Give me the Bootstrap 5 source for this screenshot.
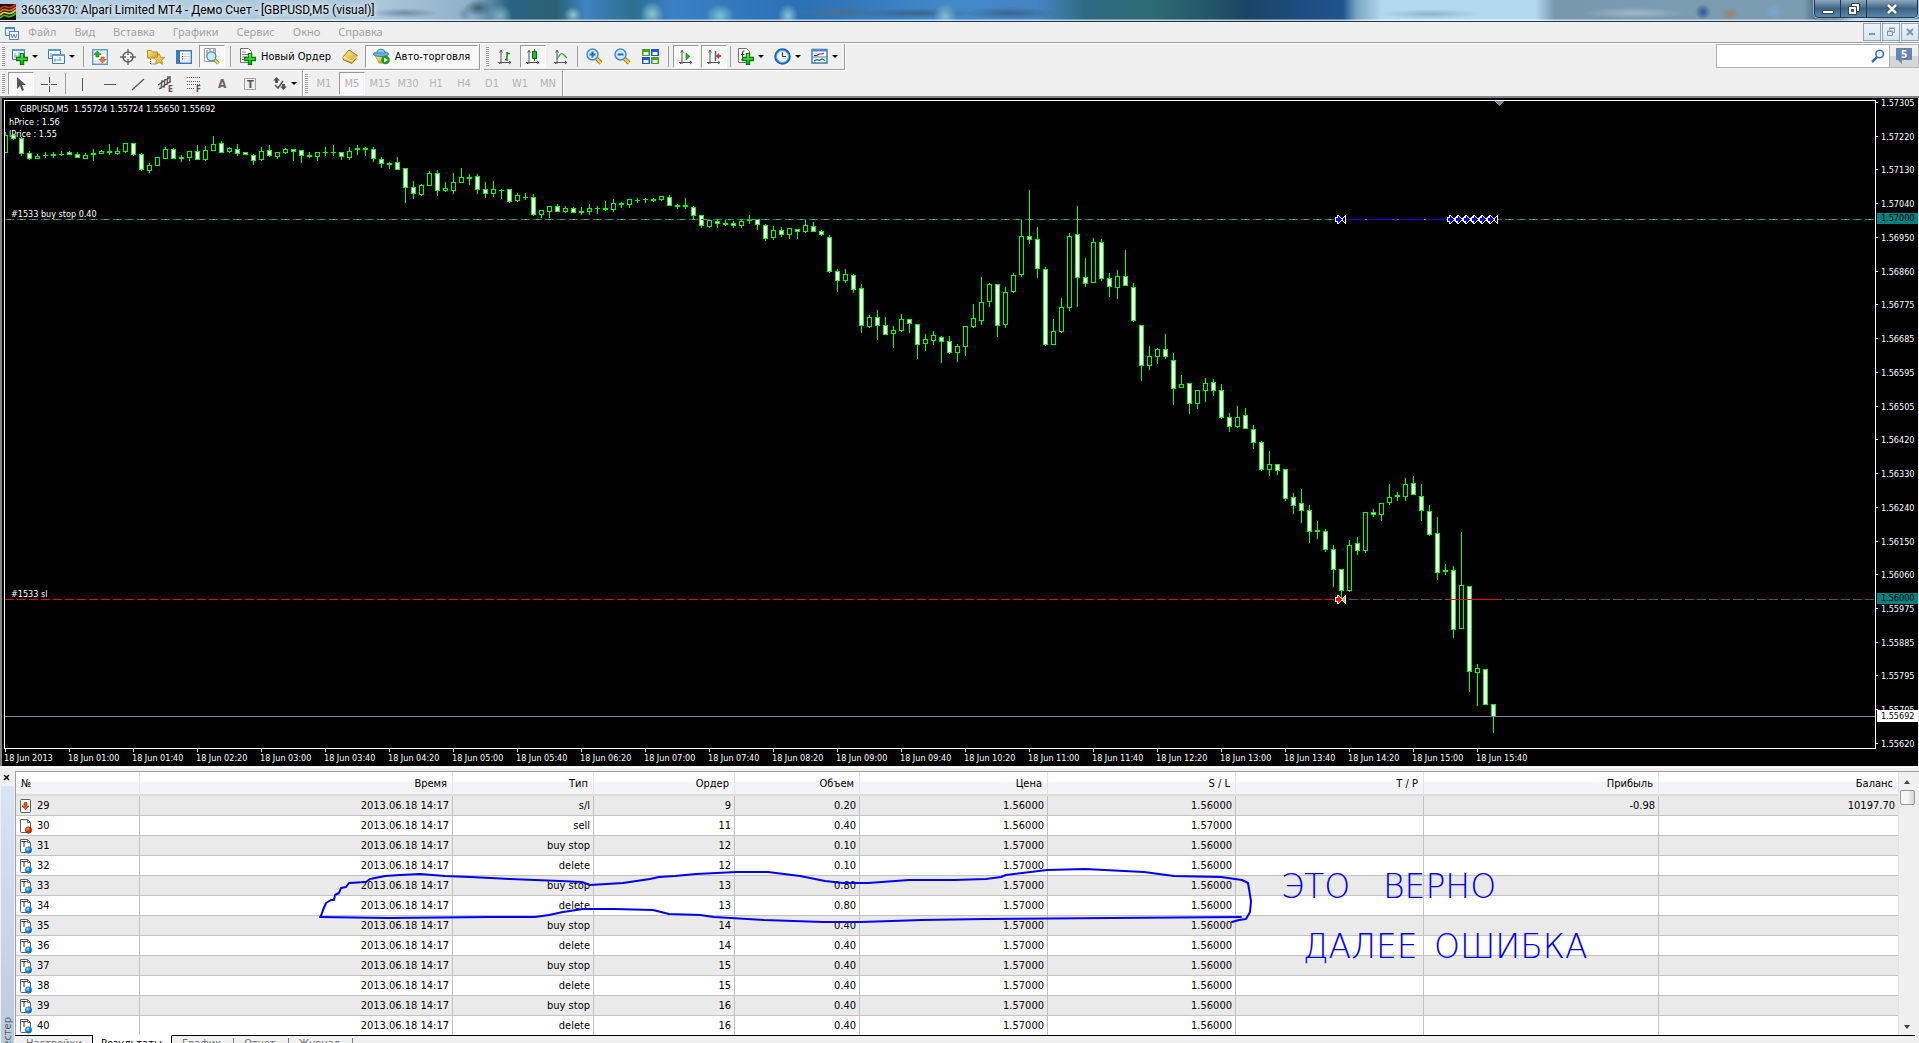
<!DOCTYPE html>
<html lang="ru">
<head>
<meta charset="utf-8">
<meta name="viewport" content="width=device-width, initial-scale=1">
<title>36063370: Alpari Limited MT4 - Демо Счет - [GBPUSD,M5 (visual)]</title>
<link href="https://cdn.jsdelivr.net/npm/bootstrap@5.3.0/dist/css/bootstrap.min.css" rel="stylesheet">
<style>
  :root { --ui: "DejaVu Sans Condensed", "DejaVu Sans", sans-serif; --menu: "Noto Sans", "Open Sans", sans-serif; --face: #f0f0f0; --line: #a0a0a0; }
  body { background: var(--face); color: #000; font-family: var(--ui); font-size: 11px; line-height: 14px; }
  button { font: inherit; color: inherit; }
  svg { display: block; flex: none; }

  /* title bar */
  .title-bar { height: 22px; border-bottom: 1px solid #223549; position: relative;
    background:
      linear-gradient(180deg, rgba(255,255,255,0) 19px, rgba(255,255,255,.7) 20px),
      radial-gradient(ellipse 9px 8px at 573px 15px, #8fc7cf, transparent),
      radial-gradient(ellipse 12px 12px at 500px 16px, #7fb2c4, transparent),
      radial-gradient(ellipse 12px 12px at 652px 14px, #8fc7cf, transparent),
      radial-gradient(ellipse 14px 12px at 720px 16px, #7fc3cf, transparent),
      radial-gradient(ellipse 10px 12px at 788px 16px, #88c4d4, transparent),
      radial-gradient(ellipse 45px 5px at 840px 12px, #4a6f8f, transparent),
      radial-gradient(ellipse 12px 12px at 945px 16px, #82bccc, transparent),
      radial-gradient(ellipse 60px 5px at 915px 13px, #3c658c, transparent),
      radial-gradient(ellipse 45px 6px at 1010px 13px, #3c658c, transparent),
      radial-gradient(ellipse 14px 8px at 478px 8px, #3c6276, transparent),
      radial-gradient(ellipse 8px 8px at 465px 14px, #6d94b4, transparent),
      radial-gradient(ellipse 34px 5px at 405px 13px, #6f8ea4, transparent),
      radial-gradient(ellipse 50px 5px at 1430px 14px, #8fb4ca, transparent),
      radial-gradient(ellipse 8px 8px at 1703px 12px, #2c569a, transparent),
      radial-gradient(ellipse 9px 6px at 1730px 14px, #a08070, transparent),
      radial-gradient(ellipse 8px 8px at 1774px 12px, #77a9d8, transparent),
      radial-gradient(ellipse 50px 6px at 1635px 13px, #9db9cb, transparent),
      radial-gradient(ellipse 22px 10px at 1860px 18px, #a9d8f4, transparent),
      linear-gradient(90deg, #b3cfe3 0, #a9c6da 20%, #8fb0c8 24.5%, #2b6484 26.5%, #2a6172 29%, #3f83c2 30.5%, #2d6f8f 33%, #3a80c4 35%, #2c70b4 42%, #4189c8 49%, #4685c4 54%, #2e6b85 56.5%, #2c6c74 60%, #245a6c 62.5%, #1a4664 65%, #1d4c80 68%, #1f5590 70%, #7ba6c2 70.7%, #b2d9f0 72%, #b2d9f0 80%, #7899ad 81%, #7b9db2 94%, #2a5274 95%, #42709a 97%, #6a98c2 100%); }
  .title-text { font: 12px/20px Roboto, sans-serif; padding-left: 5px; text-shadow: 0 0 6px #fff, 0 0 8px #fff; }
  .win-group { height: 18px; width: 104px; border: 1px solid #22384e; border-top: 0; border-radius: 0 0 5px 5px; box-shadow: 0 0 0 1px rgba(255,255,255,.4); margin-right: 1px; }
  .win-btn { border: 0; background: linear-gradient(180deg, #8fa9bf, #3d6384 50%, #5c86a8); height: 17px; flex: 1 1 0; padding: 0; display: grid; place-items: center; }
  .win-btn + .win-btn { border-left: 1px solid #22384e; }
  .win-btn:first-child { border-radius: 0 0 0 4px; } .win-btn:last-child { border-radius: 0 0 4px 0; flex-grow: 2; }

  /* menu */
  .menu-row { height: 22px; border-bottom: 1px solid #fff; box-shadow: inset 0 -1px 0 var(--line); font: 11px/20px var(--menu); }
  .menu-row a { color: #a2a2a2; text-decoration: none; }
  .menu-links { gap: 18px; padding-left: 8px; }
  .mdi-set { gap: 1px; padding-top: 1px; }
  .mdi-btn { width: 18px; height: 18px; border: 1px solid #96a5b4; background: linear-gradient(180deg, #eef4fb, #d4e4f4); padding: 0; display: grid; place-items: center; }

  /* toolbars */
  .tool-row-a { height: 27px; }
  .tool-row-b { height: 27px; border-bottom: 2px solid #858585; }
  .tool-strip { border-right: 1px solid var(--line); box-shadow: 1px 0 0 #fff; height: 100%; }
  .tool-row-a .tool-strip { border-bottom: 1px solid var(--line); box-shadow: 1px 1px 0 #fff; height: 26px; }
  .grip { width: 3px; height: 19px; margin: 0 2px; background: repeating-linear-gradient(180deg, #9a9a9a 0 1px, #fff 1px 2px); }
  .tool-btn { width: 26px; height: 23px; margin: 0 1px; padding: 0; border: 1px solid transparent; background: none; display: flex; align-items: center; justify-content: center; flex: none; }
  .tool-btn.pressed { border-color: #9a9a9a #fff #fff #9a9a9a; background: #f8f8f8; }
  .tool-wide { width: auto; padding: 0 3px; gap: 5px; white-space: nowrap; }
  .tool-auto { width: 113px; }
  .tool-drop { width: 37px; height: 23px; padding: 0 0 0 4px; border: 0; background: none; display: flex; align-items: center; gap: 4px; flex: none; }
  .tool-drop::after { content: ""; border: 3px solid transparent; border-top-color: #000; border-bottom: 0; }
  .tool-drop.short { width: 34px; gap: 3px; }
  .tsep { width: 1px; height: 21px; margin: 0 2px; background: var(--line); flex: none; }
  .tsep.roomy { margin: 0 3px 0 4px; }
  .frame-btn { color: #b4b4b4; }
  .find-box { width: 174px; height: 24px; border: 1px solid #b0b0b0; background: #fff; }
  .find-box input { border: 0; outline: 0; background: none; min-width: 0; }
  .chat-btn { width: 29px; height: 24px; border: 1px solid #b8b8b8; border-left: 0; background: linear-gradient(180deg, #efefef 50%, #d6d6d6 50%); padding: 0; display: grid; place-items: center; }

  /* chart */
  .chart-pane { background: #000; color: #fff; border-left: 2px solid #858585; border-right: 1px solid #f0f0f0; padding: 2px 0 0 2px; font-size: 9px; line-height: 12px; min-height: 0; }
  .chart-body { min-height: 0; }
  .plot-box { border: 1px solid #fff; overflow: hidden; min-width: 0; }
  .price-axis { width: 42px; position: relative; padding: 0 0 0 5px; margin: -3px 0 -1px; }
  .price-axis div { position: relative; white-space: nowrap; }
  .price-axis .tick::before { content: ""; position: absolute; left: -5px; top: 5px; width: 2px; height: 1px; background: #fff; }
  .price-axis .price-tag { position: absolute; left: 1px; right: 0; padding-left: 4px; line-height: 11px; height: 11px; background: #008080; color: #000; }
  .price-axis .price-tag.bid { background: #fff; height: 12px; line-height: 12px; }
  .time-axis { height: 17px; overflow: hidden; }
  .time-axis span { width: 64px; flex: none; position: relative; padding-top: 3px; white-space: nowrap; }
  .time-axis span::before { content: ""; position: absolute; left: 1px; top: 0; width: 1px; height: 3px; background: #fff; }

  /* tester */
  .tester { height: 277px; border-top: 1px solid var(--face); box-shadow: inset 0 1px 0 #fff; position: relative; overflow: hidden; }
  .side-tab { width: 15px; }
  .side-close { border: 0; background: none; padding: 0; height: 18px; margin: 1px 0 0 3px; line-height: 18px; }
  .side-bar { width: 13px; margin-left: 1px; background: linear-gradient(180deg, #d9e5f2, #bccbdc); color: #4c5a68; writing-mode: vertical-rl; line-height: 13px; position: relative; }
  .side-bar span { transform: rotate(180deg); position: absolute; left: 0; bottom: -10px; }
  .grid-side { min-width: 0; }
  .grid-wrap { border-left: 1px solid var(--line); border-top: 1px solid var(--line); margin: 4px 0 -1px; }
  .result-grid { table-layout: fixed; width: 100%; border-collapse: separate; border-spacing: 0; background: #fff; line-height: 14px; }
  .result-grid th { height: 24px; padding: 2px 5px 0; font-weight: 400; text-align: right; border-right: 1px solid #e2e4e8; border-bottom: 2px solid #dcdcdc; background: linear-gradient(180deg, #fff 45%, #f3f4f6 45%); }
  .result-grid td { height: 20px; padding: 0 3px; text-align: right; border-right: 1px solid #c2c2c2; border-bottom: 1px solid #c2c2c2; }
  .result-grid th:first-child, .result-grid td:first-child { text-align: left; }
  .result-grid th:last-child, .result-grid td:last-child { border-right: 0; }
  .result-grid tbody tr:nth-child(odd) td { background: #eaeaea; }
  .result-grid tbody tr:last-child td { border-bottom: 0; }
  .scroll-col { width: 17px; background: #f0f0f0; border-left: 1px solid #e4e4e4; }
  .scroll-thumb { width: 15px; height: 15px; border: 1px solid #979797; border-radius: 2px; background: linear-gradient(90deg, #f6f6f6 50%, #d4d4d4); margin-top: 6px; }
  .arrow-up, .arrow-down { border: 3px solid transparent; height: 0; width: 0; }
  .arrow-up { border-bottom: 4px solid #444; border-top: 0; margin-top: 8px; } .arrow-down { border-top: 4px solid #444; border-bottom: 0; margin-bottom: 7px; }
  .tab-row { height: 20px; flex: none; color: #707070; margin-right: 4px; position: relative; line-height: 12px; }
  .tab-row a { color: inherit; text-decoration: none; border-top: 1px solid #000; height: 20px; padding-top: 2px; white-space: nowrap; background: var(--face); }
  .tab-row a span { display: block; border-right: 1px solid #808080; padding: 0 12px 0 10px; }
  .tab-row a.first-tab { width: 78px; padding-left: 11px; border-right: 1px solid #000; }
  .tab-row a.active { width: 79px; padding-left: 8px; background: #fff; color: #000; border-top-color: #fff; border-right: 1px solid #000; }
  .ink { position: absolute; left: 0; top: 0; pointer-events: none; }
  .ink text { font-family: "DejaVu Sans", sans-serif; font-weight: 200; font-size: 33px; fill: #00f; }
</style>
<script src="https://cdn.jsdelivr.net/npm/bootstrap@5.3.0/dist/js/bootstrap.bundle.min.js"></script>
</head>
<body class="d-flex flex-column vh-100 overflow-hidden m-0">

<svg width="0" height="0" class="position-absolute" aria-hidden="true">
  <defs>
    <linearGradient id="gGreen" x2="0" y2="1"><stop stop-color="#5dff5d"/><stop offset="1" stop-color="#00a000"/></linearGradient>
    <linearGradient id="gGold" x2="1" y2="1"><stop stop-color="#fff0a0"/><stop offset="1" stop-color="#d09a18"/></linearGradient>
    <radialGradient id="gBlue" cx=".35" cy=".3"><stop stop-color="#9fe0ff"/><stop offset="1" stop-color="#0878c8"/></radialGradient>
    <radialGradient id="gRed" cx=".35" cy=".3"><stop stop-color="#ff9a60"/><stop offset="1" stop-color="#c82800"/></radialGradient>
    <symbol id="plus" viewBox="0 0 11 11"><path d="M4 .5h3V4h3.500v3H7v3.500H4V7H.5V4H4z" fill="url(#gGreen)" stroke="#067a06"/></symbol>
    <symbol id="axes" viewBox="0 0 16 16"><path d="M4 1v14M1 13.500h13M2.500 3.500 4 1.500l1.500 2M12 12l2 1.500-2 1.500M2 15l2-2" fill="none" stroke="#555"/></symbol>
    <symbol id="lens" viewBox="0 0 17 17"><path d="m10.500 10.500 4.500 4.500" stroke="#a87a10" stroke-width="4"/><path d="m10.500 10.500 4.500 4.500" stroke="#ffd84a" stroke-width="2"/><circle cx="6.500" cy="6.500" r="5.500" fill="#cfe9ff" stroke="#4a8ad0" stroke-width="1.500"/></symbol>
    <symbol id="docT" viewBox="0 0 14 16"><path d="M1.500 1.500h7l3 3v9a1 1 0 0 1-1 1h-8a1 1 0 0 1-1-1z" fill="#fff" stroke="#606060"/><path d="M8.500 1.500v3h3" fill="none" stroke="#606060"/><path d="M2.500 3.500h5M5 3.500V9" stroke="#303030"/><circle cx="9.500" cy="12" r="3.200" fill="url(#gBlue)" stroke="#1b68a0" stroke-width=".6"/></symbol>
    <symbol id="docR" viewBox="0 0 14 16"><path d="M1.500 1.500h7l3 3v9a1 1 0 0 1-1 1h-8a1 1 0 0 1-1-1z" fill="#fff" stroke="#606060"/><path d="M8.500 1.500v3h3" fill="none" stroke="#606060"/><circle cx="9.500" cy="12" r="3.200" fill="url(#gRed)" stroke="#982000" stroke-width=".6"/></symbol>
    <symbol id="docDown" viewBox="0 0 14 16"><rect x="1.500" y="1.500" width="10" height="13" rx="1" fill="#fff" stroke="#606060"/><path d="M5 4.500h3V8h2l-3.500 3.500L3 8h2z" fill="#f05010" stroke="#a03000" stroke-width=".6"/></symbol>
    <symbol id="fish" viewBox="0 0 11 9"><path d="M10.500.5v8L6.500 4.500z" fill="var(--tail, #000)" stroke="#fff"/><path d="M0 2h2V0h1l4.500 4.500L3 9H2V7H0z" fill="#fff"/><path d="M1 3h2V1l3.500 3.500L3 8V6H1z" fill="currentColor"/></symbol>
  </defs>
</svg>

<header class="title-bar d-flex flex-shrink-0">
  <svg width="16" height="16" viewBox="0 0 16 16" class="mt-1"><path fill="#111" d="M0 0h16v16H0z"/><g fill="none" stroke-width="1.800"><path d="M0 5q4-4 7-2t9-3" stroke="#d03020"/><path d="M0 8q4-4 7-2t9-3" stroke="#e07020"/><path d="M0 11q4-4 7-2t9-3" stroke="#d8d030"/><path d="M0 14q4-4 7-2t9-3" stroke="#40b030"/></g></svg>
  <div class="title-text text-nowrap">36063370: Alpari Limited MT4 - Демо Счет - [GBPUSD,M5 (visual)]</div>
  <div class="win-group d-flex ms-auto">
    <button class="win-btn" aria-label="Свернуть"><svg width="12" height="12"><path d="M.5 7.500h11v3H.5z" fill="#fff" stroke="#344"/></svg></button>
    <button class="win-btn" aria-label="Развернуть"><svg width="12" height="12"><path d="M3.500.5h8v8h-8z" fill="#fff" stroke="#344"/><path d="M.5 3.500h8v8h-8z" fill="#fff" stroke="#344"/><path d="M3.500 6.500h2v2h-2z" fill="#577" stroke="#344"/></svg></button>
    <button class="win-btn" aria-label="Закрыть"><svg width="12" height="12"><path d="m2 2 8 8m0-8-8 8" stroke="#344" stroke-width="4.500"/><path d="m2 2 8 8m0-8-8 8" stroke="#fff" stroke-width="2.600"/></svg></button>
  </div>
</header>

<nav class="menu-row d-flex flex-shrink-0">
  <svg width="16" height="16" viewBox="0 0 16 16" class="ms-1 mt-1"><path d="M1.500 1.500h9v8h-9z" fill="#e8f2ff" stroke="#4a86d8"/><path d="M1 1h10v2H1zM5 5h10v2H5z" fill="#4a86d8"/><path d="M5.500 5.500h9v8h-9z" fill="#fff" stroke="#4a86d8"/><path d="m7 8 1.500 4L10 8l1.500 4L13 8" fill="none" stroke="#4a86d8"/></svg>
  <div class="d-flex menu-links">
    <a href="#">Файл</a><a href="#">Вид</a><a href="#">Вставка</a><a href="#">Графики</a><a href="#">Сервис</a><a href="#">Окно</a><a href="#">Справка</a>
  </div>
  <div class="d-flex ms-auto mdi-set">
    <button class="mdi-btn" aria-label="Свернуть окно"><svg width="10" height="10"><path d="M2 6h6v2H2z" fill="#8296aa"/></svg></button>
    <button class="mdi-btn" aria-label="Восстановить окно"><svg width="10" height="10"><path d="M3.500 3V1.500h5v4H7M1.500 4.500h5v4h-5zM1 4h6M3 1h6" fill="none" stroke="#8296aa"/></svg></button>
    <button class="mdi-btn" aria-label="Закрыть окно"><svg width="10" height="10"><path d="m2 2 6 6m0-6L2 8" stroke="#8296aa" stroke-width="2"/></svg></button>
  </div>
</nav>

<div class="tool-row-a d-flex flex-shrink-0">
  <div class="tool-strip d-flex align-items-center">
    <i class="grip"></i>
    <button class="tool-drop" aria-label="Новый график"><svg width="17" height="17" viewBox="0 0 17 17"><path d="M1.500 1.500h12v10h-12z" fill="#fff" stroke="#3a7ab8"/><path d="M1 1h13v2H1z" fill="#5b9ad4"/><path d="M4 5v5M3 8h6M8 4v5" stroke="#7aa8cc"/><use href="#plus" x="5" y="5" width="12" height="12"/></svg></button>
    <button class="tool-drop" aria-label="Профили"><svg width="17" height="17" viewBox="0 0 17 17"><path d="M.5 1.500h12v9H.5z" fill="#fff" stroke="#3a7ab8"/><path d="M0 1h13v2H0z" fill="#5b9ad4"/><path d="M4.500 6.500h12v9h-12z" fill="#fff" stroke="#3a7ab8"/><path d="M4 6h13v2H4z" fill="#5b9ad4"/><path d="M7 10v4M6 12h8M12 9v4M2 8h2M3 5v4" stroke="#7aa8cc"/></svg></button>
    <i class="tsep"></i>
    <button class="tool-btn" aria-label="Обзор рынка"><svg width="16" height="16" viewBox="0 0 16 16"><path d="M.7.7h14.600v14.600H.7z" fill="#fff" stroke="#5a9ad0" stroke-width="1.400"/><path d="M8 4h6M2 12h5" stroke="#c4d4e4"/><path d="M5.500 2 9 5.500H7V8H4V5.500H2z" fill="#28b428" stroke="#087008" stroke-width=".6"/><path d="M10.500 14 14 10.500h-2V8H9v2.500H7z" fill="#f08040" stroke="#c03000" stroke-width=".6"/></svg></button>
    <button class="tool-btn" aria-label="Окно данных"><svg width="16" height="16" viewBox="0 0 16 16"><circle cx="8" cy="8" r="5" fill="none" stroke="#666" stroke-width="1.600"/><path d="M8 0v6M8 10v6M0 8h6M10 8h6" stroke="#666" stroke-width="1.400"/></svg></button>
    <button class="tool-btn" aria-label="Навигатор"><svg width="18" height="16" viewBox="0 0 18 16"><path d="M.5 1.500h4l1 1.500h5v6h-10z" fill="url(#gGold)" stroke="#b88a18"/><path d="M3.500 10v5h4" fill="none" stroke="#444" stroke-dasharray="1 1"/><path d="m12 4.500 1.700 3.700 4 .4-3 2.700.9 4-3.600-2-3.600 2 .9-4-3-2.700 4-.4z" fill="url(#gGold)" stroke="#b88a18" stroke-width=".8"/></svg></button>
    <button class="tool-btn" aria-label="Терминал"><svg width="16" height="16" viewBox="0 0 16 16"><path d="M.7 1.700h14.600v12.600H.7z" fill="#fff" stroke="#3a7ab8" stroke-width="1.400"/><path d="M1 2h3v12H1z" fill="#3a7ab8"/><path d="M6 5h8M6 7.500h8M6 10h8M6 12h8" stroke="#c0d0e0"/><path d="M6 5h1M6 7.500h1M6 10h1" stroke="#d04040"/></svg></button>
    <button class="tool-btn pressed" aria-label="Тестер стратегий"><svg width="18" height="18" viewBox="0 0 18 18"><path d="M1.500.5h11v13h-11z" fill="#fff" stroke="#a0a0a0"/><path d="M4 2v8M7 1v4M11 1v4" stroke="#777"/><use href="#lens" x="3" y="3" width="14" height="14"/></svg></button>
    <i class="tsep roomy"></i>
    <button class="tool-btn tool-wide"><svg width="17" height="17" viewBox="0 0 17 17"><path d="M1.500.5h8l3 3v11h-11z" fill="#fff" stroke="#707070"/><path d="M3 4h4M3 6.500h7M3 9h5M3 11.500h3" stroke="#808080"/><use href="#plus" x="5" y="5" width="12" height="12"/></svg>Новый Ордер</button>
    <button class="tool-btn" aria-label="MetaEditor"><svg width="17" height="15" viewBox="0 0 17 15"><path d="m1 8 6-7 9 6-6 7.500-9-4z" fill="url(#gGold)" stroke="#a87010"/><path d="m1 8 8.500 4L16 7" fill="none" stroke="#fff2b0"/></svg></button>
    <button class="tool-btn tool-wide tool-auto pressed"><svg width="17" height="17" viewBox="0 0 17 17"><path d="M2 7h12l-3 8H6z" fill="url(#gGold)" stroke="#b88a18" stroke-width=".8"/><ellipse cx="8" cy="6" rx="7.500" ry="2.500" fill="#6ab4e0" stroke="#3a84b8"/><path d="M4 5q0-4 4-4t4 4z" fill="#8accf0" stroke="#3a84b8" stroke-width=".8"/><circle cx="12.500" cy="12" r="4.300" fill="#18a018"/><path d="M11 9.500v5l4-2.500z" fill="#fff"/></svg>Авто-торговля</button>
  </div>
  <div class="tool-strip d-flex align-items-center ms-1">
    <i class="grip"></i>
    <button class="tool-btn" aria-label="Бары"><svg width="16" height="16"><use href="#axes"/><path d="M10 3v9M8 10.500h2M10 4.500h3" stroke="#188018" stroke-width="1.500"/></svg></button>
    <button class="tool-btn pressed" aria-label="Японские свечи"><svg width="16" height="16"><use href="#axes"/><path d="M9.500 0v12" stroke="#188018"/><path d="M7.500 2.500h4v7h-4z" fill="#20c020" stroke="#087008"/></svg></button>
    <button class="tool-btn" aria-label="Линия"><svg width="16" height="16"><use href="#axes"/><path d="M4 10q4-7 6-5t4 4" fill="none" stroke="#40a040" stroke-width="1.300"/></svg></button>
    <i class="tsep"></i>
    <button class="tool-btn" aria-label="Увеличить"><svg width="17" height="17"><use href="#lens"/><path d="M3.500 6.500h6M6.500 3.500v6" stroke="#2a6ab0" stroke-width="2"/></svg></button>
    <button class="tool-btn" aria-label="Уменьшить"><svg width="17" height="17"><use href="#lens"/><path d="M3.500 6.500h6" stroke="#2a6ab0" stroke-width="2"/></svg></button>
    <button class="tool-btn" aria-label="Расположить окна"><svg width="17" height="17" viewBox="0 0 17 17"><path d="M0 1h8v7H0zM9 9h8v7H9z" fill="#48a018"/><path d="M9 1h8v7H9zM0 9h8v7H0z" fill="#2058d0"/><path d="M1.500 4h5v3h-5zM10.500 4h5v3h-5zM1.500 12h5v3h-5zM10.500 12h5v3h-5z" fill="#e8f4f0"/></svg></button>
    <i class="tsep roomy"></i>
    <button class="tool-btn pressed" aria-label="Автопрокрутка"><svg width="16" height="16"><use href="#axes"/><path d="m8 4 4 3.500L8 11z" fill="#28b428" stroke="#087008" stroke-width=".6"/></svg></button>
    <button class="tool-btn pressed" aria-label="Сдвиг графика"><svg width="16" height="16"><use href="#axes"/><path d="M9.500 2v10" stroke="#3a70b0" stroke-width="1.500"/><path d="m10 7 3-2.500v2h2v1h-2v2z" fill="#d03010" stroke="#d03010" stroke-width=".6"/></svg></button>
    <i class="tsep"></i>
    <button class="tool-drop" aria-label="Индикаторы"><svg width="17" height="17" viewBox="0 0 17 17"><path d="M1.500.5h8l3 3v11h-11z" fill="#fff" stroke="#707070"/><path d="M7.500 3q-2-1-2 2v6q0 1-1.500 1M4 6.500h3.500" fill="none" stroke="#404040"/><use href="#plus" x="5" y="5" width="12" height="12"/></svg></button>
    <button class="tool-drop" aria-label="Периоды"><svg width="17" height="17" viewBox="0 0 17 17"><circle cx="8.500" cy="8.500" r="7" fill="#f4faff" stroke="#1a62c4" stroke-width="2.600"/><circle cx="8.500" cy="8.500" r="6" fill="none" stroke="#6ab8f0"/><path d="M8.500 4.500v4H12" fill="none" stroke="#444" stroke-width="1.200"/></svg></button>
    <button class="tool-drop" aria-label="Шаблоны"><svg width="17" height="17" viewBox="0 0 17 17"><path d="M1 1.500h15v13.500H1z" fill="#fff" stroke="#3a7ab8" stroke-width="1.400"/><path d="M1 1h15v2.500H1z" fill="#4a8aca"/><path d="M1 9h15" stroke="#3a7ab8"/><path d="M3 7.500h3l2-1.500h3l2-1" fill="none" stroke="#902020" stroke-width="1.200"/><path d="m3 13 3-1.500 2 1 3-1.500 3 1.500" fill="none" stroke="#208040" stroke-width="1.200"/></svg></button>
  </div>
  <div class="d-flex ms-auto">
    <div class="find-box d-flex align-items-center"><input type="text" class="flex-fill" aria-label="Поиск"><svg width="14" height="14" viewBox="0 0 14 14" class="me-1"><path d="m1 13 5-5" stroke="#3a6ac8" stroke-width="2.500"/><circle cx="8.700" cy="5" r="3.800" fill="#eef6ff" stroke="#3a6ac8" stroke-width="1.500"/></svg></div>
    <button class="chat-btn" aria-label="Сообщения"><svg width="16" height="16"><path d="M0 0h16v12H6v4l-4-4H0z" fill="#6684b4"/><text x="5" y="10" font-size="10" font-weight="700" fill="#fff">5</text></svg></button>
  </div>
</div>

<div class="tool-row-b d-flex flex-shrink-0">
  <div class="tool-strip d-flex align-items-center">
    <i class="grip"></i>
    <button class="tool-btn pressed" aria-label="Курсор"><svg width="16" height="16"><path d="M4 1v12l3-3 2 5 2-1-2-5h4z" fill="#555"/></svg></button>
    <button class="tool-btn" aria-label="Перекрестие"><svg width="16" height="16"><path d="M8.500 1v6M8.500 10v6M0 8.500h7M10 8.500h6M8 8.500h1" stroke="#555"/></svg></button>
    <i class="tsep"></i>
    <button class="tool-btn" aria-label="Вертикальная линия"><svg width="16" height="16"><path d="M8.500 2v13" stroke="#555"/></svg></button>
    <button class="tool-btn" aria-label="Горизонтальная линия"><svg width="16" height="16"><path d="M2 8.500h12" stroke="#555"/></svg></button>
    <button class="tool-btn" aria-label="Трендовая линия"><svg width="16" height="16"><path d="M2 14 14 3" stroke="#555" stroke-width="1.200"/></svg></button>
    <button class="tool-btn" aria-label="Канал"><svg width="18" height="18" viewBox="0 0 18 18"><path d="m1 10 12-8M2 14 14 6M5 5l-1 9M8 4 7 13M11 1l-1 9M13 1v7" stroke="#555" stroke-width="1.300"/><text x="11" y="17" font-size="8" font-weight="700" fill="#555">E</text></svg></button>
    <button class="tool-btn" aria-label="Фибоначчи"><svg width="18" height="18" viewBox="0 0 18 18"><path d="M2 2.500h13M2 6.500h13M2 9.500h13M2 13.500h8" stroke="#555" stroke-dasharray="1 1"/><text x="11" y="17" font-size="8" font-weight="700" fill="#555">F</text></svg></button>
    <button class="tool-btn" aria-label="Текст"><svg width="16" height="16"><text x="4" y="12" font-size="12" font-weight="700" fill="#666">A</text></svg></button>
    <button class="tool-btn" aria-label="Текстовая метка"><svg width="16" height="16"><path d="M2.500 2.500h11v11h-11z" fill="none" stroke="#555" stroke-dasharray="1 1"/><text x="5" y="12" font-size="11" font-weight="700" fill="#555">T</text></svg></button>
    <button class="tool-drop short ms-1" aria-label="Стрелки"><svg width="16" height="16"><path d="M1 4.500 4.500 1 8 4.500H6V7H3V4.500zM8 10.500h2V8h3v2.500h2L11.500 14z" fill="#555"/><path d="m3 9 3 3 5-7" fill="none" stroke="#555" stroke-width="1.500"/></svg></button>
  </div>
  <div class="tool-strip d-flex align-items-center" id="frames"><i class="grip"></i></div>
</div>

<main class="chart-pane flex-fill d-flex flex-column">
  <div class="chart-body d-flex flex-fill">
    <div class="plot-box flex-fill"><svg id="plot" width="100%" height="100%" shape-rendering="crispEdges"></svg></div>
    <div class="price-axis d-flex flex-column justify-content-between" id="prices"></div>
  </div>
  <div class="time-axis d-flex" id="times"></div>
</main>

<section class="tester d-flex flex-shrink-0">
  <div class="side-tab d-flex flex-column flex-shrink-0">
    <button class="side-close align-self-start" aria-label="Закрыть панель"><svg width="7" height="7"><path d="m1 1 5 5m0-5L1 6" stroke="#000" stroke-width="1.600"/></svg></button>
    <div class="side-bar flex-fill"><span>Тестер</span></div>
  </div>
  <div class="grid-side flex-fill d-flex flex-column">
    <div class="grid-wrap d-flex flex-shrink-0">
      <table class="result-grid">
        <colgroup><col style="width:124px"><col style="width:313px"><col style="width:141px"><col style="width:141px"><col style="width:125px"><col style="width:188px"><col style="width:188px"><col style="width:188px"><col style="width:235px"><col></colgroup>
        <thead><tr><th>№</th><th>Время</th><th>Тип</th><th>Ордер</th><th>Объем</th><th>Цена</th><th>S / L</th><th>T / P</th><th>Прибыль</th><th>Баланс</th></tr></thead>
        <tbody id="rows"></tbody>
      </table>
      <div class="scroll-col d-flex flex-column align-items-center flex-shrink-0 me-1"><i class="arrow-up"></i><i class="scroll-thumb"></i><i class="arrow-down mt-auto"></i></div>
    </div>
    <nav class="tab-row d-flex"><a href="#" class="first-tab">Настройки</a><a href="#" class="active">Результаты</a><a href="#"><span>График</span></a><a href="#"><span>Отчет</span></a><a href="#"><span>Журнал</span></a><a class="flex-fill"></a></nav>
  </div>
  <svg class="ink" width="1700" height="277" viewBox="0 766 1700 277">
    <g fill="none" stroke="#00f" stroke-width="2" stroke-linejoin="round" stroke-linecap="round">
      <path d="M321 915 323 909 326 902 331 899 334 899 335 894 339 892 341 887 346 886 349 882 366 881 370 878 385 875 400 874 420 873 445 875 470 876 510 878 560 880 582 881 590 884 623 882 650 878 659 876 675 875 696 873 737 871 768 871 800 875 825 880 843 882 868 882 909 879 954 879 986 878 1001 876 1006 874 1047 869 1085 868 1144 871 1174 875 1221 876 1242 879 1248 882 1251 900 1250 911 1246 918 1239 919 1232 921"/>
      <path d="M1241 916 986 918 922 919 861 921 823 921 764 919 714 916 700 914 669 913 653 909 614 908 583 908 563 911 549 914 535 916 490 916 388 917 320 916"/>
    </g>
    <text x="1281" y="897">ЭТО</text><text x="1383" y="897">ВЕРНО</text>
    <text x="1303" y="957">ДАЛЕЕ</text><text x="1434" y="957">ОШИБКА</text>
  </svg>
</section>

<script>
// candles: high, body top, body bottom, low; f = falling, r = rising, d = doji
const candles = `132 135 153 153 r|134 135 139 140 f|137 138 154 156 f|151 153 159 160 f|154 156 159 159 r|152 155 156 158 d|152 154 156 158 d|151 154 155 156 d|151 152 155 155 f|152 154 158 158 f
153 155 159 159 r|149 153 155 161 d|150 151 154 154 r|144 151 153 155 d|147 151 154 155 r|143 143 152 153 r|143 143 155 156 f|153 154 170 171 f|163 165 171 173 r|157 157 166 166 r
147 149 159 159 r|148 149 159 159 f|155 157 159 162 d|151 151 158 161 r|145 151 160 160 f|146 150 160 161 r|136 144 151 151 r|141 143 153 153 f|147 148 152 153 r|144 149 154 156 f
152 152 155 155 f|154 155 161 165 f|147 151 160 161 r|145 150 156 157 f|152 152 157 159 r|148 149 153 154 r|149 149 152 161 f|150 150 156 163 f|152 155 157 158 d|152 152 157 161 r
147 152 153 156 d|145 152 153 156 d|152 152 157 160 f|147 151 158 160 r|145 148 150 155 d|147 148 150 156 d|147 149 159 162 f|157 159 164 168 f|162 163 165 169 d|157 162 170 170 f
168 168 188 203 f|181 187 194 199 f|184 185 195 196 r|171 173 186 186 r|170 173 191 196 f|182 188 191 192 r|173 182 191 194 r|168 177 183 183 r|174 177 179 185 d|174 176 190 194 f
182 189 194 198 f|181 189 194 197 r|189 190 191 199 d|189 189 202 203 f|193 195 201 202 r|193 197 198 200 d|194 197 215 216 f|210 210 215 218 r|206 206 212 218 r|204 206 212 212 f
206 208 212 213 r|207 208 213 213 f|207 211 213 215 d|204 208 212 215 r|206 208 209 214 d|201 208 210 211 d|199 203 210 212 r|202 203 205 208 d|199 199 205 208 r|198 200 201 203 d
198 199 200 203 d|198 199 201 202 d|196 196 200 201 r|195 197 206 206 f|204 205 207 209 d|198 205 207 209 d|206 207 216 220 f|215 215 226 228 f|220 220 227 228 r|220 221 224 228 f
220 223 225 226 d|221 223 226 228 f|220 221 226 228 r|215 219 221 224 d|219 219 225 230 f|224 225 239 241 f|226 230 238 240 r|227 230 235 237 f|228 228 235 239 r|229 229 232 239 f
220 225 232 233 r|222 226 232 232 f|230 231 235 236 f|235 237 272 273 f|269 271 281 292 f|269 274 281 283 r|274 275 290 293 f|284 288 326 333 f|315 317 327 328 r|310 317 326 340 f
317 325 335 335 f|326 330 334 348 r|314 319 331 332 r|319 319 324 333 f|324 324 345 359 f|334 339 344 351 r|331 335 341 345 r|336 337 342 363 f|336 341 353 354 f|344 346 353 362 r
326 326 347 356 r|304 318 327 328 r|277 302 321 325 r|283 284 302 307 r|284 284 326 337 f|287 292 325 328 r|273 275 292 293 r|220 236 275 277 r|190 236 240 244 f|227 239 269 278 f
267 269 345 346 f|319 331 345 345 r|298 307 332 333 r|233 236 308 311 r|206 234 278 307 f|258 277 284 287 f|238 242 283 283 r|239 242 279 281 f|273 278 287 297 f|270 276 288 299 r
250 276 286 286 f|283 287 321 322 f|325 325 366 381 f|346 356 366 370 r|348 349 357 364 r|334 349 357 359 f|353 360 389 405 f|375 384 388 388 r|383 383 404 414 f|390 390 404 409 r
378 383 391 402 r|379 382 391 396 f|384 390 418 419 f|413 417 427 432 f|406 417 427 428 r|408 415 429 429 f|425 429 443 449 f|441 442 470 471 f|451 464 470 476 r|464 464 471 475 f
469 469 499 501 f|493 497 506 514 f|489 503 511 523 f|505 510 532 543 f|521 530 532 539 d|529 531 550 552 f|545 549 570 587 f|569 569 591 598 f|540 545 591 592 r|537 543 551 555 f
512 512 551 553 r|509 512 515 517 f|503 503 515 521 r|484 497 503 505 r|492 495 497 501 d|478 484 497 501 r|476 483 495 495 f|484 496 511 521 f|505 511 535 536 f|517 533 573 580 f
564 570 572 575 d|566 570 630 638 f|532 585 629 629 r|586 586 672 692 f|664 668 673 706 r|669 669 705 705 f|704 704 717 733 f`.split(/[|\n]/);
const green = '#00ff00';
let out = '<g transform="translate(-5 -101)">';
candles.forEach((c, i) => {
  const [hi, top, bot, lo, kind] = c.split(' '), x = 5 + 8 * i;
  out += `<path d="M${x} ${hi}h1V${lo}h-1z" fill="${green}"/><path d="M${x - 2} ${top}h5V${bot}h-5z" fill="${green}"/>`;
  if (kind !== 'd') out += `<path d="M${x - 1} ${+top + 1}h3V${bot - 1}h-3z" fill="${kind === 'f' ? '#fff' : '#000'}"/>`;
});
const dash = (x1, x2, y, color, on) => `<line x1="${x1}" x2="${x2}" y1="${y}.5" y2="${y}.5" stroke="${color}" stroke-dasharray="${on} ${12 - on}"/>`;
out += dash(5, 1900, 219, '#008080', 9) + dash(8, 1900, 219, '#32cd32', 3);
out += dash(5, 1337, 599, '#ff0000', 9) + dash(1349, 1900, 599, '#008080', 9) + dash(1352, 1900, 599, '#ff0000', 3);
out += '<path d="M1450 599h50v1h-50z" fill="#f00"/><path d="M5 716h1900v1H5z" fill="#778899"/>';
out += '<path d="M1345 219.500h102" stroke="#00f" stroke-dasharray="20 2 3 2"/>';
out += '<path d="M1495 101h9l-4.500 5z" fill="#778899"/>';
[1335, 1447, 1455, 1463, 1471, 1479, 1487].forEach(x => out += `<use href="#fish" x="${x}" y="215" width="11" height="9" style="color:#00f"/>`);
out += '<use href="#fish" x="1335" y="595" width="11" height="9" style="color:#f00;--tail:#daa520"/>';
out += '<g fill="#fff" font-size="9"><text x="20" y="112">GBPUSD,M5&#160; 1.55724 1.55724 1.55650 1.55692</text><text x="9" y="125">hPrice : 1.56</text><text x="9" y="137">lPrice : 1.55</text><text x="11" y="217">#1533 buy stop 0.40</text><text x="11" y="597">#1533 sl</text></g></g>';
document.getElementById('plot').innerHTML = out;

document.getElementById('prices').innerHTML =
  '1.57305 1.57220 1.57130 1.57040 1.56950 1.56860 1.56775 1.56685 1.56595 1.56505 1.56420 1.56330 1.56240 1.56150 1.56060 1.55975 1.55885 1.55795 1.55705 1.55620'.split(' ').map(p => `<div class="tick">${p}</div>`).join('') +
  [['1.57000', 116, ''], ['1.56000', 496, ''], ['1.55692', 613, 'bid']].map(([p, y, k]) => `<div class="price-tag ${k}" style="top:${y}px">${p}</div>`).join('');

document.getElementById('times').innerHTML = ['2013', ...Array.from({ length: 23 }, (_, i) => { const m = 60 + 40 * i; return String(Math.floor(m / 60)).padStart(2, '0') + ':' + String(m % 60).padStart(2, '0'); })].map(t => `<span>18 Jun ${t}</span>`).join('');

document.getElementById('frames').innerHTML += ['M1', 'M5', 'M15', 'M30', 'H1', 'H4', 'D1', 'W1', 'MN'].map(f => `<button class="tool-btn frame-btn${f === 'M5' ? ' pressed' : ''}">${f}</button>`).join('');

const deals = [['s/l', 9, '0.20', '1.56000', '1.56000', '-0.98', '10197.70'], ['sell', 11, '0.40', '1.56000', '1.57000'],
  ['buy stop', 12, '0.10'], ['delete', 12, '0.10'], ['buy stop', 13, '0.80'], ['delete', 13, '0.80'], ['buy stop', 14, '0.40'], ['delete', 14, '0.40'],
  ['buy stop', 15, '0.40'], ['delete', 15, '0.40'], ['buy stop', 16, '0.40'], ['delete', 16, '0.40']];
document.getElementById('rows').innerHTML = deals.map(([type, order, lots, price = '1.57000', sl = '1.56000', profit = '', balance = ''], i) =>
  `<tr><td><div class="d-flex align-items-center gap-1"><svg width="14" height="16"><use href="#${['docDown', 'docR'][i] || 'docT'}"/></svg>${29 + i}</div></td><td>2013.06.18 14:17</td><td>${type}</td><td>${order}</td><td>${lots}</td><td>${price}</td><td>${sl}</td><td></td><td>${profit}</td><td>${balance}</td></tr>`).join('');
</script>
</body>
</html>
